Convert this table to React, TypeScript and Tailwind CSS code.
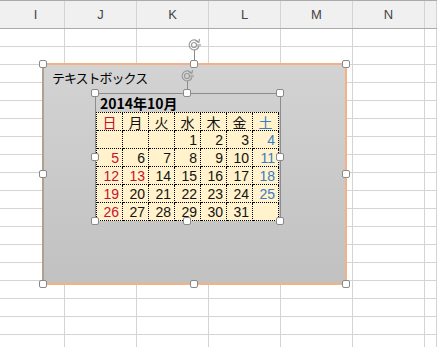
import React from "react";

const COLS = ["I", "J", "K", "L", "M", "N", ""];
const COL_W = ["w-[65px]", "w-[72px]", "w-[72px]", "w-[72px]", "w-[72px]", "w-[72px]", "flex-1"];
const ROWS = Array.from({ length: 18 }, (_, i) => i);

const WEEK = ["日", "月", "火", "水", "木", "金", "土"];
const DAYS: (number | null)[][] = [
  [null, null, null, 1, 2, 3, 4],
  [5, 6, 7, 8, 9, 10, 11],
  [12, 13, 14, 15, 16, 17, 18],
  [19, 20, 21, 22, 23, 24, 25],
  [26, 27, 28, 29, 30, 31, null],
];
const HOLIDAYS = [13];

function Handle({ x, y }: { x: number; y: number }) {
  return (
    <div
      className="absolute w-[8px] h-[8px] bg-white border border-[#8a8a8a] rounded-[2px]"
      style={{ left: x - 4, top: y - 4 }}
    />
  );
}

function Rotate({ x, y, to }: { x: number; y: number; to: number }) {
  return (
    <>
      <div className="absolute w-px bg-[#8a8a8a]" style={{ left: x, top: y + 5, height: to - y - 8 }} />
      <svg
        className="absolute"
        style={{ left: x - 7, top: y - 7 }}
        width="15"
        height="14"
        viewBox="0 0 15 14"
        fill="none"
        stroke="#9a9a9a"
        strokeWidth="1.2"
      >
        <path d="M11.5 4.5 A5 5 0 1 0 12 8" />
        <path d="M8.5 2.5 L11.8 4.6 L12.6 1" />
        <circle cx="7" cy="7" r="2.5" />
        <path d="M9.5 7 L14 7" />
      </svg>
    </>
  );
}

function dayColor(col: number, d: number | null) {
  if (col === 0 || (d !== null && HOLIDAYS.includes(d))) return "text-[#c8102e]";
  if (col === 6) return "text-[#3a7cc4]";
  return "text-[#111]";
}

export default function App() {
  return (
    <div className="relative w-[437px] h-[347px] overflow-hidden bg-white font-['Noto_Sans_CJK_JP',sans-serif]">
      {/* sheet grid */}
      <div className="flex h-[29px] bg-[#f0f0f0] border-t border-b border-[#ababab]">
        {COLS.map((c, i) => (
          <div
            key={i}
            className={`${COL_W[i]} shrink-0 h-full border-r border-[#d4d4d4] flex items-center justify-center text-[13px] text-[#444] font-['Liberation_Sans',sans-serif] ${i === 0 ? "pl-[7px]" : ""}`}
          >
            {c}
          </div>
        ))}
      </div>
      {ROWS.map((r) => (
        <div key={r} className="flex h-[18px]">
          {COLS.map((_, i) => (
            <div key={i} className={`${COL_W[i]} shrink-0 h-full border-r border-b border-[#d4d4d4]`} />
          ))}
        </div>
      ))}

      {/* text box */}
      <div className="absolute left-[42px] top-[63px] w-[305px] h-[222px] border-2 border-[#f4b183] border-l-[#b0a090] bg-gradient-to-b from-[#d3d3d3] to-[#c1c1c1]">
        <div className="absolute left-[8px] top-[4px] text-[13px] tracking-[-1px] text-black leading-none pt-[2px]">
          テキストボックス
        </div>
      </div>

      {/* calendar object */}
      <div className="absolute left-[95px] top-[93px] w-[186px] h-[129px] border border-[#8c8c8c] border-b-0">
        <div className="h-[18px] pl-[4px] text-[14px] font-bold leading-[18px] text-black">2014年10月</div>
        <div className="grid grid-cols-[repeat(7,26px)] w-[183px] border-l border-t border-dotted border-black bg-[#fff2cc]">
          {WEEK.map((w, i) => (
            <div
              key={w}
              className={`h-[18px] border-r border-b border-dotted border-black flex items-center justify-center text-[14px] leading-none ${dayColor(i, null)}`}
            >
              {w}
            </div>
          ))}
          {DAYS.flatMap((row, ri) =>
            row.map((d, ci) => (
              <div
                key={`${ri}-${ci}`}
                className={`h-[18px] border-r border-b border-dotted border-black flex items-center justify-end pr-[3px] text-[14px] leading-none font-['Liberation_Sans',sans-serif] ${dayColor(ci, d)}`}
              >
                {d ?? ""}
              </div>
            ))
          )}
        </div>
      </div>

      {/* selection handles */}
      <Rotate x={194} y={45} to={64} />
      <Handle x={43} y={64} />
      <Handle x={194} y={64} />
      <Handle x={346} y={64} />
      <Handle x={43} y={174} />
      <Handle x={346} y={174} />
      <Handle x={43} y={284} />
      <Handle x={194} y={284} />
      <Handle x={346} y={284} />

      <Rotate x={187} y={76} to={93} />
      <Handle x={95} y={93} />
      <Handle x={187} y={93} />
      <Handle x={280} y={93} />
      <Handle x={95} y={157} />
      <Handle x={280} y={157} />
      <Handle x={95} y={221} />
      <Handle x={187} y={221} />
      <Handle x={280} y={221} />
    </div>
  );
}
